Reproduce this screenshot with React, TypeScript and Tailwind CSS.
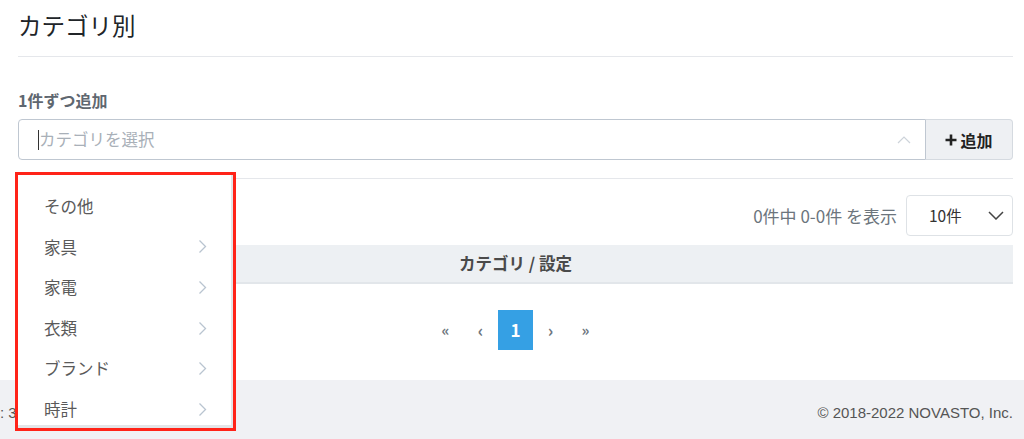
import React from "react";

const jp = { fontFamily: '"Noto Sans CJK JP", "Noto Sans", sans-serif' };

function ChevronRight() {
  return (
    <svg width="9" height="15" viewBox="0 0 9 15" fill="none">
      <path d="M1.5 1.5 L7.5 7.5 L1.5 13.5" stroke="#b9c4d0" strokeWidth="1.3" />
    </svg>
  );
}

export default function App() {
  const items = ["その他", "家具", "家電", "衣類", "ブランド", "時計"];
  return (
    <div className="relative w-[1024px] h-[439px] overflow-hidden bg-white" style={jp}>
      <div className="pl-[18px] pr-[11px]">
        <div className="h-[57px] border-b border-[#e5e7eb] flex items-center">
          <h1 className="text-[23.5px] text-[#212529] leading-none -mt-[5px]">カテゴリ別</h1>
        </div>
        <div className="pt-[33px] text-[16px] font-bold text-[#5f6770] leading-[20px]">1件ずつ追加</div>
        <div className="mt-[9px] flex h-[41px]">
          <div className="flex-1 flex items-center border border-[#bfc7d1] rounded-l-[4px] pl-[19px] pr-[14px]">
            <span className="w-px h-[20px] bg-[#333]" />
            <span className="text-[16.5px] text-[#a9b0b8] flex-1">カテゴリを選択</span>
            <svg width="14" height="8" viewBox="0 0 14 8" fill="none">
              <path d="M1 7 L7 1 L13 7" stroke="#cdd3da" strokeWidth="1.2" />
            </svg>
          </div>
          <button className="w-[87px] flex items-center justify-center gap-[3px] bg-[#eef0f3] border border-l-0 border-[#d5dae0] rounded-r-[4px] text-[16px] font-bold text-[#222]">
            <svg width="12" height="12" viewBox="0 0 12 12"><path d="M6 0.5 V11.5 M0.5 6 H11.5" stroke="#222" strokeWidth="2.6" /></svg>
            追加
          </button>
        </div>
        <div className="mt-[18px] border-b border-[#e5e7eb]" />
        <div className="mt-[16px] flex justify-end items-center gap-[9px]">
          <span className="text-[17px] text-[#6c757d]">0件中 0-0件 を表示</span>
          <div className="w-[107px] h-[41px] border border-[#dee2e6] rounded-[4px] flex items-center pl-[22px] pr-[8px]">
            <span className="flex-1 text-[15.5px] text-[#333]">10件</span>
            <svg width="16" height="9" viewBox="0 0 16 9" fill="none"><path d="M1 1 L8 8 L15 1" stroke="#444" strokeWidth="1.5" /></svg>
          </div>
        </div>
        <div className="mt-[9px] h-[39px] bg-[#edf0f3] border-b-2 border-[#e2e6ea] flex items-center justify-center">
          <span className="text-[16.5px] font-bold text-[#4a4a4a]">カテゴリ / 設定</span>
        </div>
        <div className="mt-[26px] flex justify-center items-center h-[40px] text-[#6c757d] font-bold text-[15px]">
          <span className="w-[35px] text-center">«</span>
          <span className="w-[35px] text-center text-[17px]">‹</span>
          <span className="w-[35px] h-[40px] bg-[#35a0e4] text-white flex items-center justify-center text-[17px]">1</span>
          <span className="w-[35px] text-center text-[17px]">›</span>
          <span className="w-[35px] text-center">»</span>
        </div>
      </div>
      <div className="absolute left-0 right-0 top-[380px] bottom-0 bg-[#f0f1f4] flex items-start justify-between pt-[22px] pr-[11px]">
        <span className="text-[15px] text-[#555]" style={{ fontFamily: '"Liberation Sans", sans-serif' }}>: 3</span>
        <span className="text-[15px] text-[#555]" style={{ fontFamily: '"Liberation Sans", sans-serif' }}>© 2018-2022 NOVASTO, Inc.</span>
      </div>
      <div className="absolute left-[15px] top-[172px] w-[221px] h-[259px] border-[3px] border-[#ff2318] bg-white overflow-hidden">
        <div className="h-full overflow-hidden border-r-2 border-b-[3px] border-[#e3e5e8] pt-[11px]">
          {items.map((t, i) => (
            <div key={t} className="h-[40.6px] flex items-center pl-[26px] pr-[24px]">
              <span className="flex-1 text-[16.5px] text-[#5a5a5a]">{t}</span>
              {i > 0 && <ChevronRight />}
            </div>
          ))}
        </div>
      </div>
    </div>
  );
}
